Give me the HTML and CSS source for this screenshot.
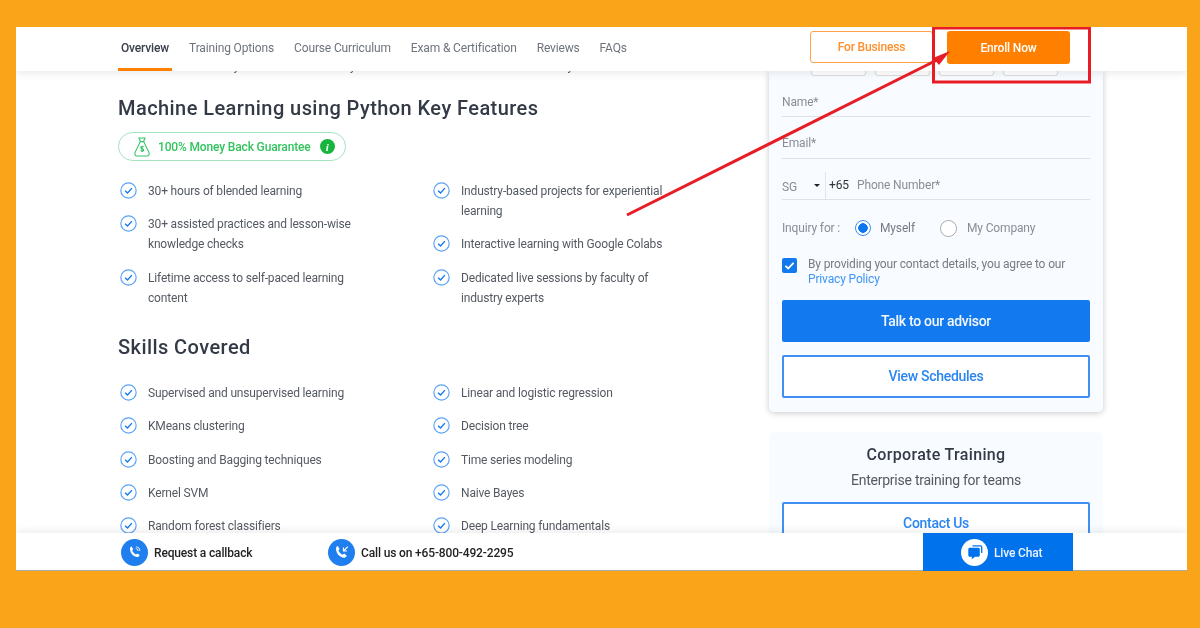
FILE: index.html
```html
<!DOCTYPE html>
<html lang="en">
<head>
<meta charset="utf-8">
<title>Machine Learning using Python</title>
<link rel="stylesheet" href="styles.css">
</head>
<body>
<div class="screen">
  <header class="topbar">
    <nav class="tabs">
      <a class="tab tab-active">Overview</a>
      <a class="tab">Training Options</a>
      <a class="tab">Course Curriculum</a>
      <a class="tab">Exam &amp; Certification</a>
      <a class="tab">Reviews</a>
      <a class="tab">FAQs</a>
    </nav>
    <div class="top-actions">
      <a class="btn-business">For Business</a>
      <a class="btn-enroll">Enroll Now</a>
    </div>
  </header>

  <main class="page">
    <section class="left">
      <p class="cut-line"><span>Master models used by leaders in the field. Python libraries and tools that are in industry</span></p>
      <h2 class="heading">Machine Learning using Python Key Features</h2>
      <div class="guarantee">
        <svg class="bag" viewBox="0 0 16 20" fill="none" stroke="#35c46a" stroke-width="1.1"><path d="M5 1h6L9.500 4.600h-3z"/><path d="M6.200 4.800 1 15.600C.5 17.400 1.300 19 3 19h10c1.700 0 2.500-1.600 2-3.400L9.800 4.800"/><path d="M9.800 10c-.5-.7-3-.9-3.100.5-.1 1.500 3.200 1 3.100 2.600-.1 1.400-2.700 1.200-3.200.4M8.100 8.700v6.200"/></svg>
        <span>100% Money Back Guarantee</span>
        <i class="info">i</i>
      </div>
      <div class="lists lists-features">
        <ul class="list">
          <li><svg class="tick" viewBox="0 0 16 16"><circle cx="8" cy="8" r="7.2"/><path d="M4.8 8.2 7.1 10.4 11.2 5.8"/></svg><span>30+ hours of blended learning</span></li>
          <li><svg class="tick" viewBox="0 0 16 16"><circle cx="8" cy="8" r="7.2"/><path d="M4.8 8.2 7.1 10.4 11.2 5.8"/></svg><span>30+ assisted practices and lesson-wise knowledge checks</span></li>
          <li><svg class="tick" viewBox="0 0 16 16"><circle cx="8" cy="8" r="7.2"/><path d="M4.8 8.2 7.1 10.4 11.2 5.8"/></svg><span>Lifetime access to self-paced learning content</span></li>
        </ul>
        <ul class="list">
          <li><svg class="tick" viewBox="0 0 16 16"><circle cx="8" cy="8" r="7.2"/><path d="M4.8 8.2 7.1 10.4 11.2 5.8"/></svg><span>Industry-based projects for experiential learning</span></li>
          <li><svg class="tick" viewBox="0 0 16 16"><circle cx="8" cy="8" r="7.2"/><path d="M4.8 8.2 7.1 10.4 11.2 5.8"/></svg><span>Interactive learning with Google Colabs</span></li>
          <li><svg class="tick" viewBox="0 0 16 16"><circle cx="8" cy="8" r="7.2"/><path d="M4.8 8.2 7.1 10.4 11.2 5.8"/></svg><span>Dedicated live sessions by faculty of industry experts</span></li>
        </ul>
      </div>
      <h2 class="heading heading-skills">Skills Covered</h2>
      <div class="lists">
        <ul class="list">
          <li><svg class="tick" viewBox="0 0 16 16"><circle cx="8" cy="8" r="7.2"/><path d="M4.8 8.2 7.1 10.4 11.2 5.8"/></svg><span>Supervised and unsupervised learning</span></li>
          <li><svg class="tick" viewBox="0 0 16 16"><circle cx="8" cy="8" r="7.2"/><path d="M4.8 8.2 7.1 10.4 11.2 5.8"/></svg><span>KMeans clustering</span></li>
          <li><svg class="tick" viewBox="0 0 16 16"><circle cx="8" cy="8" r="7.2"/><path d="M4.8 8.2 7.1 10.4 11.2 5.8"/></svg><span>Boosting and Bagging techniques</span></li>
          <li><svg class="tick" viewBox="0 0 16 16"><circle cx="8" cy="8" r="7.2"/><path d="M4.8 8.2 7.1 10.4 11.2 5.8"/></svg><span>Kernel SVM</span></li>
          <li><svg class="tick" viewBox="0 0 16 16"><circle cx="8" cy="8" r="7.2"/><path d="M4.8 8.2 7.1 10.4 11.2 5.8"/></svg><span>Random forest classifiers</span></li>
        </ul>
        <ul class="list">
          <li><svg class="tick" viewBox="0 0 16 16"><circle cx="8" cy="8" r="7.2"/><path d="M4.8 8.2 7.1 10.4 11.2 5.8"/></svg><span>Linear and logistic regression</span></li>
          <li><svg class="tick" viewBox="0 0 16 16"><circle cx="8" cy="8" r="7.2"/><path d="M4.8 8.2 7.1 10.4 11.2 5.8"/></svg><span>Decision tree</span></li>
          <li><svg class="tick" viewBox="0 0 16 16"><circle cx="8" cy="8" r="7.2"/><path d="M4.8 8.2 7.1 10.4 11.2 5.8"/></svg><span>Time series modeling</span></li>
          <li><svg class="tick" viewBox="0 0 16 16"><circle cx="8" cy="8" r="7.2"/><path d="M4.8 8.2 7.1 10.4 11.2 5.8"/></svg><span>Naive Bayes</span></li>
          <li><svg class="tick" viewBox="0 0 16 16"><circle cx="8" cy="8" r="7.2"/><path d="M4.8 8.2 7.1 10.4 11.2 5.8"/></svg><span>Deep Learning fundamentals</span></li>
        </ul>
      </div>
    </section>

    <aside class="right">
      <div class="card">
        <div class="peek"><span></span><span></span><span></span><span></span></div>
        <div class="field field-first">Name*</div>
        <div class="field">Email*</div>
        <div class="field field-phone">
          <span class="country">SG</span><span class="caret"></span><span class="code">+65</span><span>Phone Number*</span>
        </div>
        <div class="inquiry">
          <span class="inquiry-label">Inquiry for :</span>
          <span class="radio radio-on"></span><span class="radio-text">Myself</span>
          <span class="radio"></span><span>My Company</span>
        </div>
        <div class="consent">
          <span class="checkbox"><svg viewBox="0 0 15 15" fill="none" stroke="#fff" stroke-width="1.8"><path d="M3.4 7.8 6.2 10.4 11.6 4.8"/></svg></span>
          <p>By providing your contact details, you agree to our <a>Privacy Policy</a></p>
        </div>
        <a class="btn-solid">Talk to our advisor</a>
        <a class="btn-outline">View Schedules</a>
      </div>
      <div class="corp">
        <h3>Corporate Training</h3>
        <p>Enterprise training for teams</p>
        <a class="btn-outline btn-contact">Contact Us</a>
      </div>
    </aside>
  </main>

  <footer class="bottombar">
    <div class="contact contact-callback">
      <span class="round"><svg viewBox="0 0 16 16" fill="#fff"><path d="M4.6 2.6 6.2 5.2 5.2 6.4c.6 1.8 1.900 3.100 3.900 4l1.200-1 2.300 1.700c-.2 1.200-1 1.900-2.300 1.900C6.500 12.800 3 9 3 4.700c0-1 .6-1.800 1.600-2.100z"/><path d="M8.800 4.200a3 3 0 0 1 2.800 2.800h-.9a2.100 2.100 0 0 0-1.900-1.900zM8.800 2.500a4.700 4.700 0 0 1 4.500 4.500h-.8a3.900 3.900 0 0 0-3.700-3.700z"/></svg></span>
      <span class="contact-text">Request a callback</span>
    </div>
    <div class="contact">
      <span class="round"><svg viewBox="0 0 16 16" fill="#fff"><path d="M3.800 2 5.600 5 4.500 6.400c.7 2 2.100 3.400 4.300 4.300l1.300-1.100 2.600 1.900c-.2 1.300-1.100 2.200-2.500 2.200C5.800 13.700 2 9.500 2 4.600 2 3.300 2.700 2.300 3.800 2z"/><path d="M13.400 2.200 10 5.600V3.400H8.900v4.100H13V6.400h-2.200l3.400-3.400z"/></svg></span>
      <span class="contact-text">Call us on +65-800-492-2295</span>
    </div>
    <a class="chat">
      <span class="chat-icon"><svg viewBox="0 0 18 18"><path fill="none" stroke="#0073ec" stroke-width="1.300" d="M6.500 2.800h7.800c.9 0 1.400.5 1.400 1.400V10"/><path fill="#0073ec" d="M3.800 4.800h8.500c.9 0 1.500.6 1.500 1.500v6c0 .9-.6 1.500-1.500 1.500H9l-3.200 2.400v-2.400h-2c-.9 0-1.500-.6-1.500-1.500v-6c0-.9.600-1.500 1.500-1.500z"/></svg></span>
      <span class="contact-text">Live Chat</span>
    </a>
  </footer>

  <svg class="annotation" viewBox="0 0 1171 544" fill="none">
    <rect x="917.500" y="1" width="156" height="54" stroke="#e81c24" stroke-width="3"/>
    <path d="M611 188 923 32" stroke="#e81c24" stroke-width="3"/>
    <path d="M934 24 917 31 923 38z" fill="#e81c24"/>
  </svg>
</div>
</body>
</html>
```
FILE: styles.css
```css
* { box-sizing: border-box; }
html, body { margin: 0; height: 100%; }
body {
  background: #faa519;
  font-family: Roboto, "Liberation Sans", sans-serif;
  font-size: 12px;
  letter-spacing: -.15px;
  padding: 27px 13px 57px 16px;
  overflow: hidden;
}
p, h2, h3, ul { margin: 0; padding: 0; }
a { color: inherit; text-decoration: none; }

.screen {
  position: relative;
  display: flex;
  flex-direction: column;
  width: 1171px;
  height: 544px;
  background: #fff;
  overflow: hidden;
  filter: blur(.3px);
}

/* top bar */
.topbar {
  position: relative;
  z-index: 2;
  flex: none;
  display: flex;
  justify-content: space-between;
  height: 44px;
  padding: 0 117px 0 102px;
  background: #fff;
  box-shadow: 0 2px 8px rgba(0, 0, 0, .09);
}
.tabs { display: flex; gap: 14px; }
.tab {
  display: flex;
  align-items: center;
  height: 44px;
  padding: 1px 3px 0;
  color: #6f747c;
  border-bottom: 3px solid transparent;
}
.tab-active { color: #3a404c; font-weight: 500; border-bottom-color: #ff7f00; }
.top-actions { display: flex; gap: 14px; padding-top: 4px; }
.btn-business, .btn-enroll {
  display: flex;
  align-items: center;
  justify-content: center;
  width: 123px;
  height: 32px;
  border-radius: 3px;
  font-weight: 500;
}
.btn-business { border: 1px solid #ffa14d; color: #ff8f2a; background: #fff; }
.btn-enroll { height: 33px; background: #ff7f00; color: #fff; }

/* content */
.page {
  flex: 1;
  min-height: 0;
  display: flex;
  overflow: hidden;
  padding-left: 102px;
}
.left { flex: none; width: 651px; }
.cut-line {
  height: 2px;
  margin-bottom: 25px;
  overflow: hidden;
  color: #555a62;
}
.cut-line span {
  display: block;
  margin-top: -11px;
  line-height: 12px;
  white-space: nowrap;
}
.heading {
  font-size: 20px;
  font-weight: 500;
  line-height: 20px;
  color: #333a46;
  letter-spacing: .43px;
}
.guarantee {
  display: inline-flex;
  align-items: center;
  height: 29px;
  margin-top: 14px;
  padding: 0 10px 0 15px;
  border: 1px solid #a3e3c2;
  border-radius: 15px;
  color: #33c45f;
  font-weight: 500;
}
.bag { width: 16px; height: 20px; margin-right: 8px; }
.info {
  display: flex;
  align-items: center;
  justify-content: center;
  width: 15px;
  height: 15px;
  margin-left: 9px;
  border-radius: 50%;
  background: #16b53e;
  color: #fff;
  font: italic 700 11px "Liberation Serif", serif;
}
.lists { display: grid; grid-template-columns: 313px 230px; margin-top: 26px; margin-left: 2px; }
.lists-features { margin-top: 20px; }
.list { list-style: none; display: flex; flex-direction: column; gap: 13.400px; }
.list li {
  display: flex;
  gap: 11px;
  line-height: 20px;
  color: #555a62;
  letter-spacing: -.17px;
}
.list li span { max-width: 212px; }
.tick { flex: none; width: 17px; height: 17px; margin-top: 1px; fill: none; stroke-width: 1.100; }
.tick circle { stroke: #5aa2f5; }
.tick path { stroke: #1279ef; stroke-width: 1.300; }
.heading-skills { margin-top: 29px; }

/* side */
.right { flex: none; width: 334px; }
.card {
  height: 341px;
  padding: 0 13px;
  background: #f8fbff;
  border-radius: 0 0 5px 5px;
  box-shadow: 0 1px 6px rgba(0, 0, 0, .22);
  color: #8a8e96;
}
.peek { display: flex; gap: 9px; height: 5px; padding-left: 29px; }
.peek span {
  width: 55px;
  background: #fff;
  border: 1px solid #ddd;
  border-top: 0;
  border-radius: 0 0 3px 3px;
}
.field {
  display: flex;
  align-items: flex-end;
  height: 41.500px;
  padding-bottom: 8px;
  line-height: 14px;
  border-bottom: 1px solid #dfe1e4;
}
.field-first { height: 41px; padding-bottom: 7px; }
.field-phone { align-items: center; padding-bottom: 0; padding-top: 13px; }
.country { width: 32px; padding-top: 3px; }
.caret {
  width: 0;
  height: 0;
  margin-right: 5px;
  border: 3px solid transparent;
  border-top: 3px solid #222;
  border-bottom: 0;
}
.code {
  width: 32px;
  height: 27px;
  line-height: 27px;
  padding-left: 3px;
  border-left: 1px solid #e3e5e8;
  color: #333;
}
.inquiry { display: flex; align-items: center; height: 16px; margin-top: 20px; }
.inquiry-label { width: 73px; }
.radio {
  flex: none;
  width: 17px;
  height: 17px;
  margin-right: 10px;
  border: 1px solid #aaa;
  border-radius: 50%;
  background: #fff;
}
.radio-on {
  width: 16px;
  height: 16px;
  margin-right: 9px;
  border: 1px solid #3b8ff2;
  background: radial-gradient(circle, #0f75ee 0 4.500px, #fff 5px);
}
.radio-text { width: 60px; color: #777b83; }
.consent { display: flex; gap: 11px; margin-top: 22px; }
.checkbox {
  flex: none;
  width: 15px;
  height: 15px;
  border-radius: 2px;
  background: #1279ef;
}
.checkbox svg { display: block; }
.consent p { line-height: 15px; margin-top: -1px; color: #777b83; }
.consent a { color: #3f96f5; }
.btn-solid, .btn-outline {
  display: flex;
  align-items: center;
  justify-content: center;
  height: 42px;
  padding-bottom: 1px;
  border-radius: 2px;
  font-size: 14px;
  font-weight: 500;
  letter-spacing: -.3px;
}
.btn-solid { margin-top: 13px; background: #1279ef; color: #f2f7ff; }
.btn-outline {
  height: 43px;
  margin-top: 13px;
  border: 2px solid #3f90f2;
  color: #2c86f0;
  background: #fff;
}
.corp {
  height: 140px;
  margin-top: 20px;
  padding: 13px 13px 0;
  background: #f8fbff;
  border-radius: 5px;
  text-align: center;
}
.corp h3 { font-size: 16px; font-weight: 500; line-height: 20px; color: #333a46; letter-spacing: .33px; }
.corp p { margin-top: 6px; font-size: 14px; line-height: 18px; color: #555a62; letter-spacing: -.24px; }
.btn-contact { margin-top: 13px; height: 42px; }

/* bottom */
.bottombar {
  position: relative;
  z-index: 2;
  flex: none;
  display: flex;
  align-items: center;
  height: 38px;
  padding: 1px 0 0 105px;
  background: #fff;
  border-bottom: 1px solid #a9a9a9;
  box-shadow: 0 -2px 8px rgba(0, 0, 0, .08);
}
.contact {
  display: flex;
  align-items: center;
  gap: 6px;
  color: #222;
  font-weight: 500;
}
.contact-callback { width: 207px; }
.contact-text { padding-top: 1px; }
.round {
  flex: none;
  display: flex;
  align-items: center;
  justify-content: center;
  width: 27px;
  height: 27px;
  border-radius: 50%;
  background: #1f7fee;
}
.round svg { width: 16px; height: 16px; }
.chat {
  display: flex;
  align-items: center;
  gap: 6px;
  height: 38px;
  width: 150px;
  margin-left: auto;
  margin-right: 114px;
  padding-left: 38px;
  background: #0073ec;
  color: #eaf3ff;
  font-weight: 500;
}
.chat-icon {
  display: flex;
  align-items: center;
  justify-content: center;
  width: 27px;
  height: 27px;
  border-radius: 50%;
  background: #fff;
}
.chat-icon svg { width: 18px; height: 18px; }

.annotation {
  position: absolute;
  z-index: 3;
  left: 0;
  top: 0;
  width: 1171px;
  height: 544px;
  pointer-events: none;
}
```
